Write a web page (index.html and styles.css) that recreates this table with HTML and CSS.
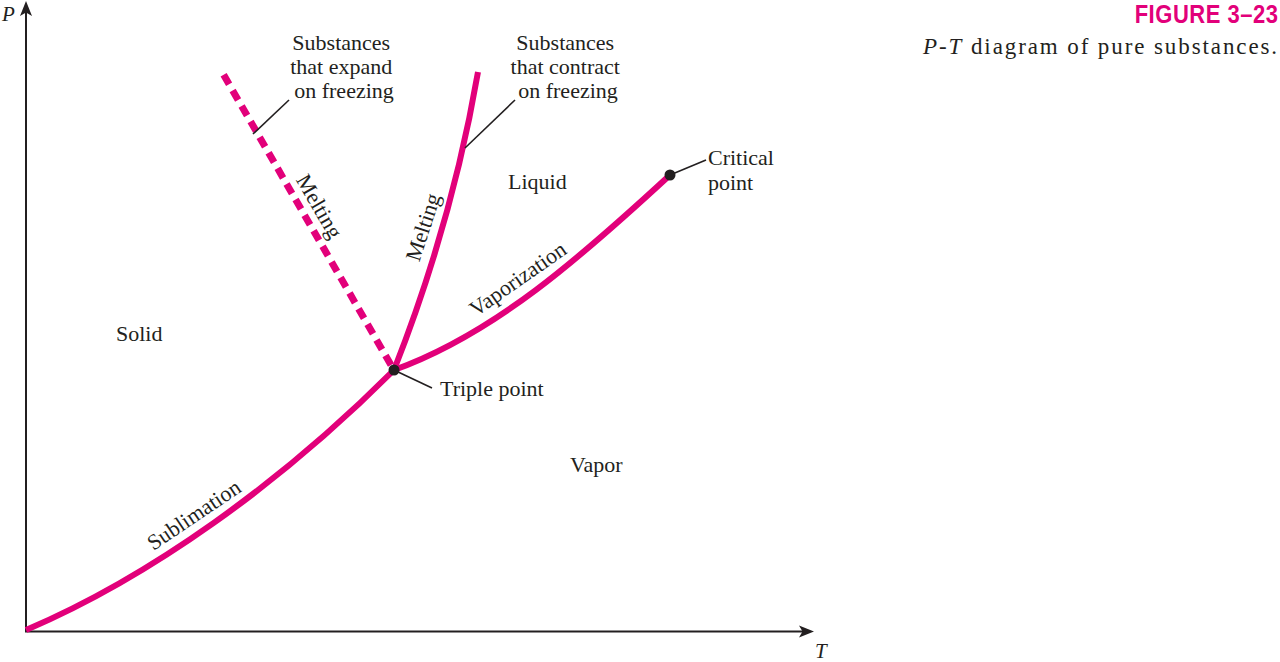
FILE: index.html
```html
<!DOCTYPE html>
<html lang="en">
<head>
<meta charset="utf-8">
<title>P-T diagram of pure substances</title>
<link rel="stylesheet" href="styles.css">
</head>
<body>
<div class="page">
  <svg class="diagram" width="840" height="662" viewBox="0 0 840 662" xmlns="http://www.w3.org/2000/svg">
    <!-- axes -->
    <line class="axis" x1="26" y1="632" x2="26" y2="10"/>
    <line class="axis" x1="25" y1="631.5" x2="804" y2="631.5"/>
    <path class="arrow" d="M26,1 L32,16 L26,12.5 L20,16 Z"/>
    <path class="arrow" d="M814,631.5 L799,637.5 L802.5,631.5 L799,625.5 Z"/>
    <text class="axis-label" x="2" y="21">P</text>
    <text class="axis-label" x="815" y="658">T</text>

    <!-- phase boundaries -->
    <path class="curve" d="M26,630 C150,577 280,484 394,370"/>
    <path class="curve" d="M394,370 C494,334 580,258 670,175"/>
    <path class="curve" d="M394,370 Q452,223 478,72"/>
    <line class="curve dashed" x1="391" y1="365" x2="222" y2="72"/>

    <!-- callout lines -->
    <line class="callout" x1="253" y1="134" x2="289" y2="100"/>
    <line class="callout" x1="465" y1="148" x2="515" y2="100"/>
    <line class="callout" x1="396" y1="371" x2="432" y2="388"/>
    <line class="callout" x1="670" y1="175" x2="706" y2="160"/>

    <!-- points -->
    <circle class="dot" cx="394" cy="370" r="5.5"/>
    <circle class="dot" cx="670" cy="175" r="5.5"/>

    <!-- labels -->
    <text class="label" text-anchor="middle">
      <tspan x="344" y="50">Substances</tspan>
      <tspan x="344" y="74">that expand</tspan>
      <tspan x="344" y="98">on freezing</tspan>
    </text>
    <text class="label" text-anchor="middle">
      <tspan x="568" y="50">Substances</tspan>
      <tspan x="568" y="74">that contract</tspan>
      <tspan x="568" y="98">on freezing</tspan>
    </text>
    <text class="label" x="508" y="189">Liquid</text>
    <text class="label">
      <tspan x="708" y="165">Critical</tspan>
      <tspan x="708" y="190">point</tspan>
    </text>
    <text class="label" x="116" y="341">Solid</text>
    <text class="label" x="570" y="472">Vapor</text>
    <text class="label" x="440" y="396">Triple point</text>

    <text class="label" text-anchor="middle" transform="translate(313,210) rotate(60)">Melting</text>
    <text class="label" text-anchor="middle" transform="translate(430,229.5) rotate(-72)">Melting</text>
    <text class="label" text-anchor="middle" transform="translate(198,521) rotate(-34)">Sublimation</text>
    <text class="label" text-anchor="middle" transform="translate(522,285) rotate(-35)">Vaporization</text>
  </svg>

  <div class="caption">
    <p class="fig-num"><span class="fig-num-text">FIGURE 3–23</span></p>
    <p class="fig-title"><i>P-T</i> diagram of pure substances.</p>
  </div>
</div>
</body>
</html>
```

FILE: styles.css
```css
html, body {
  margin: 0;
  padding: 0;
  background: #ffffff;
}

.page {
  display: flex;
  width: 1280px;
  height: 662px;
  overflow: hidden;
}

.diagram {
  flex: none;
  display: block;
}

.axis {
  stroke: #231f20;
  stroke-width: 2;
}

.arrow {
  fill: #231f20;
}

.axis-label {
  font-family: "Liberation Serif", "Times New Roman", serif;
  font-style: italic;
  font-size: 21px;
  fill: #231f20;
}

.curve {
  fill: none;
  stroke: #e2007a;
  stroke-width: 6;
  stroke-linecap: butt;
}

.dashed {
  stroke-width: 7;
  stroke-dasharray: 11 7;
}

.callout {
  stroke: #231f20;
  stroke-width: 1.6;
}

.dot {
  fill: #231f20;
}

.label {
  font-family: "Liberation Serif", "Times New Roman", serif;
  font-size: 22px;
  fill: #231f20;
}

.caption {
  flex: 1;
  text-align: right;
  padding-right: 1px;
}

.fig-num {
  margin: 0;
  font-family: "Liberation Sans", Arial, sans-serif;
  font-weight: bold;
  font-size: 25px;
  line-height: 28px;
  color: #e2007a;
}

.fig-num-text {
  display: inline-block;
  letter-spacing: 0.6px;
  transform: scaleX(0.88);
  transform-origin: right center;
}

.fig-title {
  margin: 6px 0 0;
  font-family: "Liberation Serif", "Times New Roman", serif;
  font-size: 23px;
  line-height: 26px;
  letter-spacing: 1.9px;
  color: #231f20;
  white-space: nowrap;
}
```
